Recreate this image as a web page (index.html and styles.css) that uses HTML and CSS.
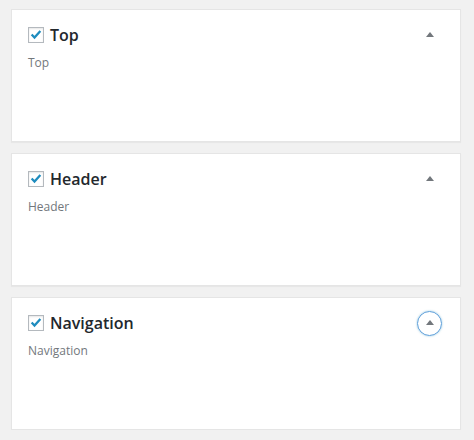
FILE: index.html
```html
<!DOCTYPE html>
<html>
<head>
<meta charset="utf-8">
<link rel="stylesheet" href="styles.css">
</head>
<body>
<div class="list">
  <div class="card">
    <div class="head">
      <label class="title"><span class="cb"><svg viewBox="0 0 16 16" width="14" height="14"><path d="M3 7.5 L6.3 11 L13 3.5" fill="none" stroke="#1e8cbe" stroke-width="2.6" stroke-linejoin="miter"/></svg></span>Top</label>
      <button class="toggle"><svg viewBox="0 0 8 5" width="8" height="5"><path d="M0 5 L4 0 L8 5 Z" fill="#72777c"/></svg></button>
    </div>
    <div class="desc">Top</div>
  </div>
  <div class="card">
    <div class="head">
      <label class="title"><span class="cb"><svg viewBox="0 0 16 16" width="14" height="14"><path d="M3 7.5 L6.3 11 L13 3.5" fill="none" stroke="#1e8cbe" stroke-width="2.6" stroke-linejoin="miter"/></svg></span>Header</label>
      <button class="toggle"><svg viewBox="0 0 8 5" width="8" height="5"><path d="M0 5 L4 0 L8 5 Z" fill="#72777c"/></svg></button>
    </div>
    <div class="desc">Header</div>
  </div>
  <div class="card">
    <div class="head">
      <label class="title"><span class="cb"><svg viewBox="0 0 16 16" width="14" height="14"><path d="M3 7.5 L6.3 11 L13 3.5" fill="none" stroke="#1e8cbe" stroke-width="2.6" stroke-linejoin="miter"/></svg></span>Navigation</label>
      <button class="toggle focus"><svg viewBox="0 0 8 5" width="8" height="5"><path d="M0 5 L4 0 L8 5 Z" fill="#72777c"/></svg></button>
    </div>
    <div class="desc">Navigation</div>
  </div>
</div>
</body>
</html>
```
FILE: styles.css
```css
html, body {
  margin: 0;
  padding: 0;
  background: #f1f1f1;
}
body {
  font-family: "Open Sans", "Noto Sans", sans-serif;
  color: #23282d;
}
.list {
  display: flex;
  flex-direction: column;
  gap: 11px;
  padding: 9px 13px 0 11px;
}
.card {
  height: 133px;
  box-sizing: border-box;
  background: #fff;
  border: 1px solid #e5e5e5;
  box-shadow: 0 1px 1px rgba(0,0,0,0.04);
  padding: 12px 18px 0 16px;
}
.head {
  display: flex;
  align-items: center;
  justify-content: space-between;
  height: 26px;
}
.title {
  display: flex;
  align-items: center;
  gap: 6px;
  font-size: 16px;
  font-weight: 600;
  color: #23282d;
}
.cb {
  width: 16px;
  height: 16px;
  box-sizing: border-box;
  border: 1px solid #b4b9be;
  background: #fff;
  box-shadow: inset 0 1px 2px rgba(0,0,0,0.1);
  display: flex;
  align-items: center;
  justify-content: center;
}
.toggle {
  width: 25px;
  height: 25px;
  padding: 0;
  margin: 0;
  border: 1px solid transparent;
  border-radius: 50%;
  background: transparent;
  display: flex;
  align-items: center;
  justify-content: center;
}
.toggle svg {
  margin-top: -1px;
}
.toggle.focus {
  border-color: #5b9dd9;
  box-shadow: 0 0 2px rgba(30,140,190,0.5);
}
.desc {
  margin-top: 6px;
  font-size: 12px;
  color: #72777c;
}
```
